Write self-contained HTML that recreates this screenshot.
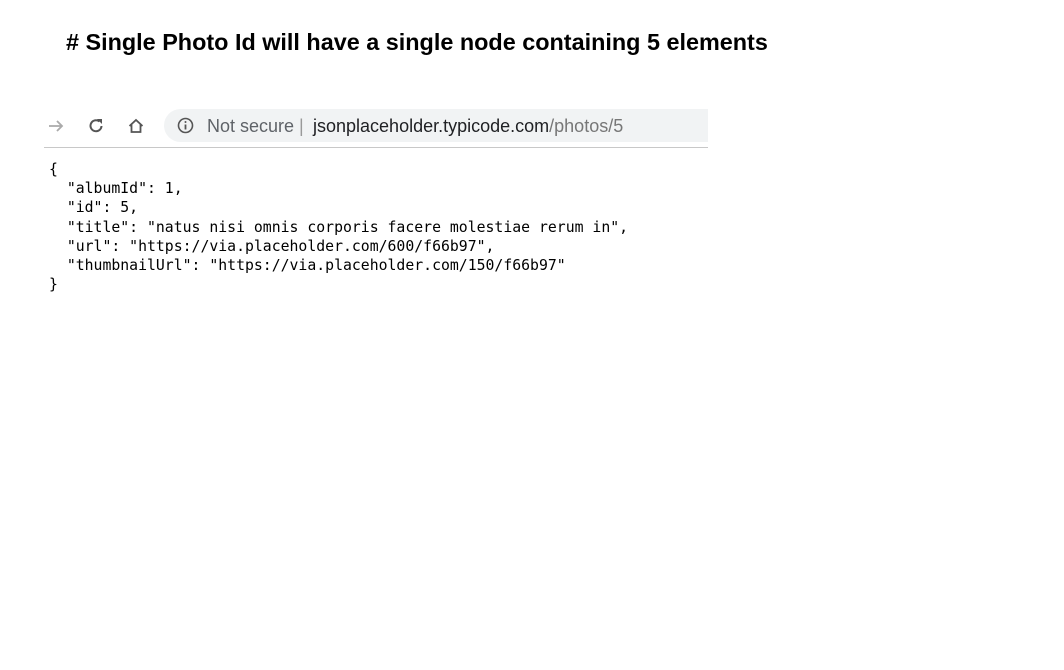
<!DOCTYPE html>
<html><head><meta charset="utf-8"><style>
body{margin:0;width:1064px;height:670px;background:#fff;position:relative;overflow:hidden;font-family:"Liberation Sans",sans-serif}
h1{position:absolute;left:66px;top:29px;margin:0;font-size:23.4px;font-weight:bold;color:#000}
.bar{position:absolute;left:44px;top:108px;width:664px;height:39px;border-bottom:1px solid #c8c8c8}
.url{position:absolute;left:120px;top:1px;width:544px;height:33px;background:#f1f3f4;border-radius:17px 0 0 17px}
.url span{position:absolute;top:7px;font-size:18px}
pre{position:absolute;left:49px;top:160px;margin:0;font-family:"DejaVu Sans Mono",monospace;font-size:14.8px;line-height:19.2px;color:#000}
</style></head><body>
<h1># Single Photo Id will have a single node containing 5 elements</h1>
<div class="bar">
<svg style="position:absolute;left:3px;top:9px" width="18" height="18" viewBox="0 0 18 18"><path d="M2 9h13M10 4l5 5-5 5" stroke="#aaa" stroke-width="1.8" fill="none"/></svg>
<svg style="position:absolute;left:43px;top:9px" width="18" height="18" viewBox="0 0 18 18"><path d="M14.5 9A5.5 5.5 0 1 1 12.5 4.5" stroke="#555" stroke-width="2" fill="none"/><path d="M10 2h5v5z" fill="#555"/></svg>
<svg style="position:absolute;left:83px;top:9px" width="18" height="18" viewBox="0 0 18 18"><path d="M2.5 9L9 3l6.5 6M4.5 7.5V15h9V7.5" stroke="#555" stroke-width="1.8" fill="none"/></svg>
<div class="url">
<svg style="position:absolute;left:13px;top:8px" width="17" height="17" viewBox="0 0 17 17"><circle cx="8.5" cy="8.5" r="7" stroke="#555" stroke-width="1.6" fill="none"/><path d="M8.5 7.5v5" stroke="#555" stroke-width="1.8"/><circle cx="8.5" cy="5" r="1" fill="#555"/></svg>
<span style="left:43px;color:#5f6368">Not secure</span>
<span style="left:135px;color:#999">|</span>
<span style="left:149px;color:#202124">jsonplaceholder.typicode.com<span style="position:static;color:#777">/photos/5</span></span>
</div>
</div>
<pre>{
  "albumId": 1,
  "id": 5,
  "title": "natus nisi omnis corporis facere molestiae rerum in",
  "url": "https://via.placeholder.com/600/f66b97",
  "thumbnailUrl": "https://via.placeholder.com/150/f66b97"
}</pre>
</body></html>
